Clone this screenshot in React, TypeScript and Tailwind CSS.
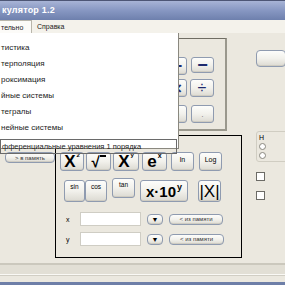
import React from 'react'

const font = "font-['Liberation_Sans','DejaVu_Sans',sans-serif]"

function XpButton({
  className = '',
  children,
}: {
  className?: string
  children: React.ReactNode
}) {
  return (
    <div
      className={`flex items-center justify-center rounded-[3px] border border-[#8f9bb0] bg-gradient-to-b from-[#fdfdfb] via-[#f2f1ec] to-[#dcdad2] shadow-[inset_0_-1px_0_#cfccc2] ${className}`}
    >
      {children}
    </div>
  )
}

function Power({ base, exp, size, expSize }: { base: string; exp: string; size: string; expSize: string }) {
  return (
    <span className="flex items-start font-bold leading-none">
      <span className={size}>{base}</span>
      <span className={`${expSize} -mt-[1px] ml-[1px]`}>{exp}</span>
    </span>
  )
}

const menuItems = [
  'тистика',
  'терполяция',
  'роксимация',
  'йные системы',
  'тегралы',
  'нейные системы',
]

export default function App() {
  return (
    <div className={`relative w-[285px] h-[285px] overflow-hidden bg-[#ebe8df] ${font}`}>
      {/* title bar */}
      <div className="h-[20px] border-t border-[#4d5675] bg-gradient-to-b from-[#a8b4d6] via-[#8797c2] to-[#6e80ad] flex items-center pl-[2px]">
        <span className="text-[9px] font-bold text-white leading-none tracking-[0.2px]">кулятор 1.2</span>
      </div>

      {/* menu bar */}
      <div className="h-[13px] bg-[#f4f2eb] flex items-stretch text-[7px] text-[#222] leading-none">
        <div className="w-[32px] bg-[#fcfbf8] border-r border-t border-[#b9b6ab] flex items-center pl-[1px]">тельно</div>
        <div className="flex items-center pl-[5px]">Справка</div>
      </div>

      {/* body */}
      <div className="flex h-[224px]">
        <div className="w-[71px] pt-[119px]">
          <XpButton className="ml-[5px] w-[50px] h-[11px] rounded-[4px]">
            <span className="text-[6px] text-[#333] leading-none">&gt; в память</span>
          </XpButton>
        </div>

        <div className="w-[187px]">
          {/* keypad panel */}
          <div className="mt-[5px] ml-[108px] w-[64px] h-[93px] border-l border-t border-[#6f6d63] border-r-2 border-b-2 border-r-[#9a988d] border-b-[#9a988d] pl-[3px] pt-[18px]">
            <div className="flex gap-[4px]">
              <XpButton className="w-[20px] h-[18px]">
                <span className="text-[18px] leading-none text-[#1d2a6e] font-bold">+</span>
              </XpButton>
              <XpButton className="w-[23px] h-[16px]">
                <span className="text-[18px] leading-none text-[#1d2a6e] font-bold">−</span>
              </XpButton>
            </div>
            <div className="flex gap-[3px] mt-[4px]">
              <XpButton className="w-[20px] h-[18px]">
                <span className="text-[17px] leading-none text-[#1d2a6e] font-bold">×</span>
              </XpButton>
              <XpButton className="w-[24px] h-[18px]">
                <span className="text-[16px] leading-none text-[#1d2a6e]">÷</span>
              </XpButton>
            </div>
            <div className="flex gap-[4px] mt-[8px]">
              <XpButton className="w-[20px] h-[18px]">
                <span className="text-[7px] leading-none text-[#222] font-bold">0</span>
              </XpButton>
              <XpButton className="w-[23px] h-[18px]">
                <span className="text-[7px] leading-none text-[#555]">.</span>
              </XpButton>
            </div>
          </div>

          {/* function panel */}
          <div className="mt-[4px] w-[187px] h-[123px] border border-black pt-[16px] text-black">
            <div className="flex pl-[4px] h-[19px]">
              <XpButton className="w-[24px] h-[19px]">
                <Power base="X" exp="2" size="text-[17px]" expSize="text-[6px]" />
              </XpButton>
              <XpButton className="ml-[2px] w-[25px] h-[19px]">
                <span className="flex items-start leading-none font-bold">
                  <span className="text-[15px]">√</span>
                  <span className="w-[6px] border-t-2 border-black mt-[1px]"></span>
                </span>
              </XpButton>
              <XpButton className="ml-[2px] w-[26px] h-[19px]">
                <Power base="X" exp="y" size="text-[17px]" expSize="text-[6px]" />
              </XpButton>
              <XpButton className="ml-[3px] w-[25px] h-[19px]">
                <Power base="e" exp="x" size="text-[17px]" expSize="text-[7px]" />
              </XpButton>
              <XpButton className="ml-[4px] w-[23px] h-[19px] items-start pt-[3px]">
                <span className="text-[7px] leading-none">ln</span>
              </XpButton>
              <XpButton className="ml-[5px] w-[23px] h-[19px] items-start pt-[3px]">
                <span className="text-[7px] leading-none">Log</span>
              </XpButton>
            </div>

            <div className="flex items-start pl-[8px] mt-[7px] h-[22px]">
              <XpButton className="mt-[2px] w-[21px] h-[22px] items-start pt-[3px]">
                <span className="text-[6.5px] leading-none">sin</span>
              </XpButton>
              <XpButton className="mt-[2px] w-[22px] h-[22px] items-start pt-[3px]">
                <span className="text-[6.5px] leading-none">cos</span>
              </XpButton>
              <XpButton className="ml-[5px] w-[23px] h-[20px] items-start pt-[3px]">
                <span className="text-[6.5px] leading-none">tan</span>
              </XpButton>
              <XpButton className="ml-[5px] mt-[2px] w-[48px] h-[22px]">
                <Power base="x·10" exp="y" size="text-[15px]" expSize="text-[9px]" />
              </XpButton>
              <XpButton className="ml-[10px] mt-[2px] w-[23px] h-[22px]">
                <span className="text-[17px] leading-none">|X|</span>
              </XpButton>
            </div>

            <div className="flex items-center pl-[10px] mt-[12px] h-[14px]">
              <span className="w-[14px] text-[7px] leading-none">x</span>
              <div className="w-[61px] h-[14px] bg-white border border-[#cfcdc4]"></div>
              <XpButton className="ml-[6px] w-[16px] h-[11px] rounded-[4px]">
                <span className="text-[7px] leading-none">▼</span>
              </XpButton>
              <XpButton className="ml-[6px] w-[54px] h-[11px] rounded-[4px]">
                <span className="text-[6px] leading-none text-[#333]">&lt; из памяти</span>
              </XpButton>
            </div>

            <div className="flex items-center pl-[10px] mt-[6px] h-[14px]">
              <span className="w-[14px] text-[7px] leading-none">y</span>
              <div className="w-[61px] h-[14px] bg-white border border-[#cfcdc4]"></div>
              <XpButton className="ml-[6px] w-[16px] h-[11px] rounded-[4px]">
                <span className="text-[7px] leading-none">▼</span>
              </XpButton>
              <XpButton className="ml-[6px] w-[55px] h-[11px] rounded-[4px]">
                <span className="text-[6px] leading-none text-[#333]">&lt; из памяти</span>
              </XpButton>
            </div>
          </div>
        </div>

        {/* right column */}
        <div className="flex-1 pl-[14px]">
          <XpButton className="mt-[17px] w-[30px] h-[17px] rounded-[4px]">
            <span></span>
          </XpButton>
          <div className="mt-[64px] h-[31px] border border-[#d0cdc2] rounded-l-[3px] pl-[2px] pt-[2px] text-[7px] leading-none">
            <div>Н</div>
            <div className="mt-[2px] w-[7px] h-[7px] rounded-full border border-[#8a8880] bg-white"></div>
            <div className="mt-[2px] w-[7px] h-[7px] rounded-full border border-[#8a8880] bg-white"></div>
          </div>
          <div className="mt-[10px] w-[9px] h-[9px] border border-[#6c6b66] bg-white"></div>
          <div className="mt-[10px] w-[9px] h-[9px] border border-[#6c6b66] bg-white"></div>
        </div>
      </div>

      {/* bottom separators */}
      <div className="mt-[6px] h-[2px] bg-[#cbc8bd]"></div>
      <div className="h-[9px] bg-[#e2dfd5]"></div>
      <div className="h-[1px] bg-[#faf9f5]"></div>
      <div className="h-[1px] bg-[#d1cec4]"></div>
      <div className="h-[10px]"></div>

      <div className="absolute left-0 bottom-0 w-full h-[3px] bg-[#6e7fa8]"></div>

      {/* dropdown menu */}
      <div className="absolute left-0 top-[33px] w-[179px] h-[116px] bg-white border-r border-b border-[#8a887f] text-[8px] text-[#222] leading-none">
        <div className="pt-[7px]">
          {menuItems.map((item) => (
            <div key={item} className="h-[16px] flex items-center pl-[1px]">
              {item}
            </div>
          ))}
        </div>
        <div className="mt-[3px] mr-[1px] h-[15px] border border-[#6a6a6a] flex items-center pl-[1px] text-[7.5px]">
          фференциальные уравнения 1 порядка
        </div>
      </div>
    </div>
  )
}
